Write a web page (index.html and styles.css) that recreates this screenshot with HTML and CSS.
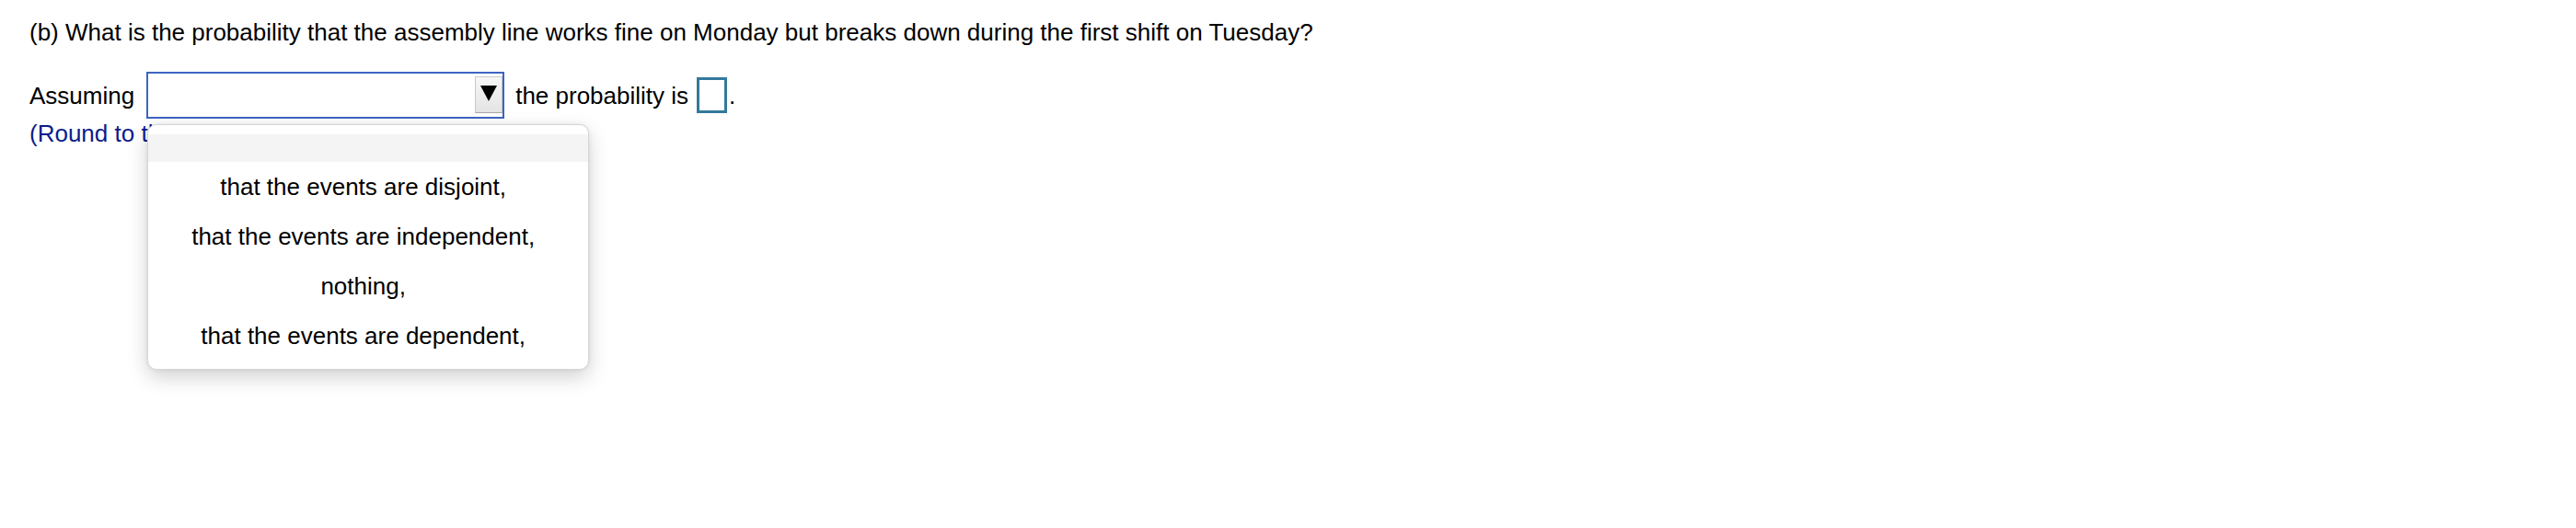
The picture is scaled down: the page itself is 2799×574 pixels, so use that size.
FILE: index.html
```html
<!DOCTYPE html>
<html lang="en">
<head>
<meta charset="utf-8">
<title>Probability question</title>
<link rel="stylesheet" href="styles.css">
</head>
<body>
<div class="page">
  <p class="question">(b) What is the probability that the assembly line works fine on Monday but breaks down during the first shift on Tuesday?</p>
  <div class="answer-row">
    <span class="label">Assuming</span>
    <div class="select">
      <div class="select-field"></div>
      <div class="select-btn">
        <svg width="18" height="17" viewBox="0 0 18 17"><polygon points="0,0 18,0 9,17" fill="#000"/></svg>
      </div>
      <div class="menu">
        <div class="option option-empty"></div>
        <div class="option">that the events are disjoint,</div>
        <div class="option">that the events are independent,</div>
        <div class="option">nothing,</div>
        <div class="option">that the events are dependent,</div>
      </div>
    </div>
    <span class="label label-after">the probability is</span>
    <span class="answer-box"></span>
    <span class="period">.</span>
  </div>
  <p class="hint">(Round to the nearest thousandth as needed.)</p>
</div>
</body>
</html>
```

FILE: styles.css
```css
html, body {
  margin: 0;
  padding: 0;
  background: #ffffff;
}

.page {
  box-sizing: border-box;
  min-height: 574px;
  padding: 20px 0 0 32px;
  font-family: "Liberation Sans", Arial, sans-serif;
  font-size: 26px;
  line-height: 30px;
  color: #000000;
}

.question {
  margin: 0;
  white-space: nowrap;
}

.answer-row {
  display: flex;
  align-items: center;
  margin-top: 28px;
  height: 51px;
}

.label {
  white-space: nowrap;
}

.select {
  position: relative;
  box-sizing: border-box;
  width: 389px;
  height: 51px;
  margin-left: 13px;
  border: 2px solid #3d64c2;
  background: #ffffff;
  display: flex;
  align-items: flex-start;
}

.select-field {
  flex: 1;
}

.select-btn {
  box-sizing: border-box;
  width: 30px;
  height: 40px;
  margin-top: 3px;
  border: 1px solid #c9c9c9;
  border-bottom-color: #a9a9a9;
  background: linear-gradient(#f7f7f7, #e4e4e4);
  display: flex;
  align-items: center;
  justify-content: center;
}

.select-btn svg {
  display: block;
  margin-top: -4px;
}

.label-after {
  margin-left: 12px;
}

.answer-box {
  box-sizing: border-box;
  width: 33px;
  height: 39px;
  margin-left: 9px;
  border: 3px solid #33799b;
  background: #ffffff;
}

.period {
  margin-left: 2px;
}

.hint {
  margin: 1px 0 0;
  color: #0b1c8c;
  white-space: nowrap;
}

.menu {
  position: absolute;
  top: calc(100% + 8px);
  left: -1px;
  z-index: 10;
  box-sizing: border-box;
  width: 480px;
  padding: 10px 0 9px;
  border: 1px solid #d6d6d6;
  border-radius: 10px;
  background: #ffffff;
  box-shadow: 0 8px 22px rgba(0, 0, 0, 0.18), 0 0 4px rgba(0, 0, 0, 0.08);
  color: #000000;
}

.option {
  height: 54px;
  line-height: 54px;
  padding-right: 11px;
  text-align: center;
  white-space: nowrap;
}

.option-empty {
  height: 30px;
  background: #f4f4f4;
}
```
